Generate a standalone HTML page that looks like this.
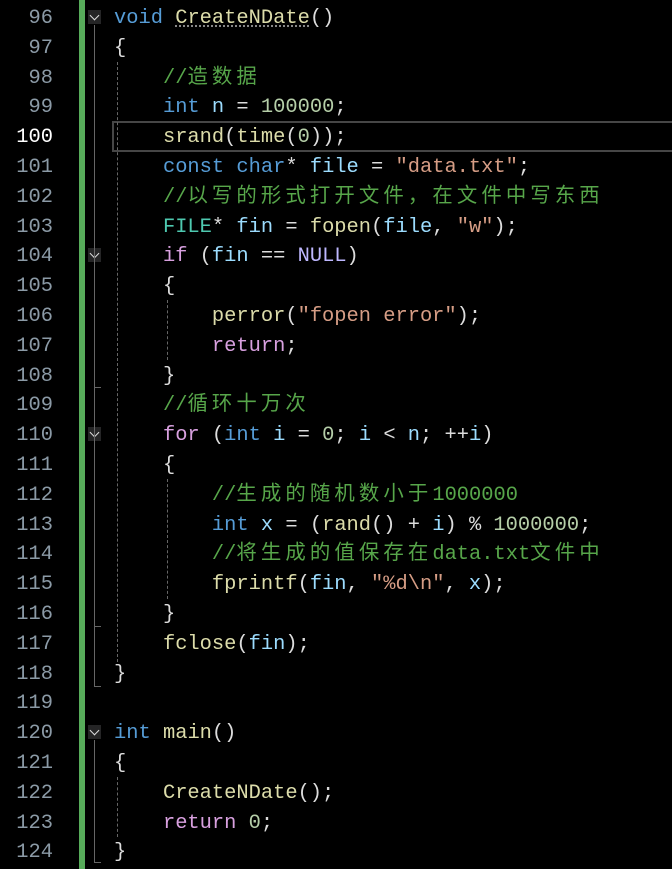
<!DOCTYPE html><html><head><meta charset="utf-8"><style>
body{margin:0;width:672px;height:869px;background:#000;overflow:hidden;position:relative;font-family:"Liberation Mono","Noto Sans CJK SC",monospace;font-size:20.4px;}
.ln{position:absolute;left:0;width:53px;text-align:right;color:#8b9aa6;line-height:29.8px;height:29.8px;margin-top:2px}
.cd{position:absolute;left:114px;white-space:pre;color:#dcdcdc;line-height:29.8px;height:29.8px;margin-top:2px}
.k{color:#569cd6}.f{color:#dcdcaa}.v{color:#9cdcfe}.n{color:#b5cea8}.s{color:#d69d85}.c{color:#57a64a}.p{color:#d8a0df}.t{color:#4ec9b0}.m{color:#beb7ff}
.z{letter-spacing:4.1px}
.bar{position:absolute;left:79px;top:0;width:6px;height:869px;background:#57ab5a}
.fold{position:absolute;left:88px;width:13px;height:14px;background:#252526}
.fold:after{content:"";position:absolute;left:3px;top:2px;width:6px;height:6px;border-right:1.5px solid #ddd;border-bottom:1.5px solid #ddd;transform:rotate(45deg)}
.fl{position:absolute;left:94px;width:6px;border-left:1px solid #666;border-bottom:1px solid #666}
.g{position:absolute;width:0;border-left:1px dashed #666}
.cur{position:absolute;left:112px;top:121px;width:570px;height:27px;border:2px solid #464646}
</style></head><body>
<div class="bar"></div>
<div class="cur"></div>
<div class="fold" style="top:10px"></div>
<div class="fold" style="top:248px"></div>
<div class="fold" style="top:427px"></div>
<div class="fold" style="top:725px"></div>
<div class="fl" style="top:25px;height:661px"></div>
<div class="fl" style="top:263px;height:124px"></div>
<div class="fl" style="top:442px;height:184px"></div>
<div class="fl" style="top:740px;height:122px"></div>
<div class="g" style="left:117px;top:62px;height:600px"></div>
<div class="g" style="left:167px;top:300px;height:60px"></div>
<div class="g" style="left:167px;top:479px;height:120px"></div>
<div class="g" style="left:117px;top:777px;height:60px"></div>

<div class="ln" style="top:2px">96</div><div class="cd" style="top:2px"><span class="k">void</span> <span class="f" style="text-decoration:underline dotted #888">CreateNDate</span>()</div>
<div class="ln" style="top:31.8px">97</div><div class="cd" style="top:31.8px">{</div>
<div class="ln" style="top:61.6px">98</div><div class="cd" style="top:61.6px">    <span class="c">//<span class="z">造数据</span></span></div>
<div class="ln" style="top:91.4px">99</div><div class="cd" style="top:91.4px">    <span class="k">int</span> <span class="v">n</span> = <span class="n">100000</span>;</div>
<div class="ln" style="top:121.2px;color:#fff">100</div><div class="cd" style="top:121.2px">    <span class="f">srand</span>(<span class="f">time</span>(<span class="n">0</span>));</div>
<div class="ln" style="top:151px">101</div><div class="cd" style="top:151px">    <span class="k">const</span> <span class="k">char</span>* <span class="v">file</span> = <span class="s">"data.txt"</span>;</div>
<div class="ln" style="top:180.8px">102</div><div class="cd" style="top:180.8px">    <span class="c">//<span class="z">以写的形式打开文件，在文件中写东西</span></span></div>
<div class="ln" style="top:210.6px">103</div><div class="cd" style="top:210.6px">    <span class="t">FILE</span>* <span class="v">fin</span> = <span class="f">fopen</span>(<span class="v">file</span>, <span class="s">"w"</span>);</div>
<div class="ln" style="top:240.4px">104</div><div class="cd" style="top:240.4px">    <span class="p">if</span> (<span class="v">fin</span> == <span class="m">NULL</span>)</div>
<div class="ln" style="top:270.2px">105</div><div class="cd" style="top:270.2px">    {</div>
<div class="ln" style="top:300px">106</div><div class="cd" style="top:300px">        <span class="f">perror</span>(<span class="s">"fopen error"</span>);</div>
<div class="ln" style="top:329.8px">107</div><div class="cd" style="top:329.8px">        <span class="p">return</span>;</div>
<div class="ln" style="top:359.6px">108</div><div class="cd" style="top:359.6px">    }</div>
<div class="ln" style="top:389.4px">109</div><div class="cd" style="top:389.4px">    <span class="c">//<span class="z">循环十万次</span></span></div>
<div class="ln" style="top:419.2px">110</div><div class="cd" style="top:419.2px">    <span class="p">for</span> (<span class="k">int</span> <span class="v">i</span> = <span class="n">0</span>; <span class="v">i</span> &lt; <span class="v">n</span>; ++<span class="v">i</span>)</div>
<div class="ln" style="top:449px">111</div><div class="cd" style="top:449px">    {</div>
<div class="ln" style="top:478.8px">112</div><div class="cd" style="top:478.8px">        <span class="c">//<span class="z">生成的随机数小于</span>1000000</span></div>
<div class="ln" style="top:508.6px">113</div><div class="cd" style="top:508.6px">        <span class="k">int</span> <span class="v">x</span> = (<span class="f">rand</span>() + <span class="v">i</span>) % <span class="n">1000000</span>;</div>
<div class="ln" style="top:538.4px">114</div><div class="cd" style="top:538.4px">        <span class="c">//<span class="z">将生成的值保存在</span>data.txt<span class="z">文件中</span></span></div>
<div class="ln" style="top:568.2px">115</div><div class="cd" style="top:568.2px">        <span class="f">fprintf</span>(<span class="v">fin</span>, <span class="s">"%d\n"</span>, <span class="v">x</span>);</div>
<div class="ln" style="top:598px">116</div><div class="cd" style="top:598px">    }</div>
<div class="ln" style="top:627.8px">117</div><div class="cd" style="top:627.8px">    <span class="f">fclose</span>(<span class="v">fin</span>);</div>
<div class="ln" style="top:657.6px">118</div><div class="cd" style="top:657.6px">}</div>
<div class="ln" style="top:687.4px">119</div>
<div class="ln" style="top:717.2px">120</div><div class="cd" style="top:717.2px"><span class="k">int</span> <span class="f">main</span>()</div>
<div class="ln" style="top:747px">121</div><div class="cd" style="top:747px">{</div>
<div class="ln" style="top:776.8px">122</div><div class="cd" style="top:776.8px">    <span class="f">CreateNDate</span>();</div>
<div class="ln" style="top:806.6px">123</div><div class="cd" style="top:806.6px">    <span class="p">return</span> <span class="n">0</span>;</div>
<div class="ln" style="top:836.4px">124</div><div class="cd" style="top:836.4px">}</div>
</body></html>
